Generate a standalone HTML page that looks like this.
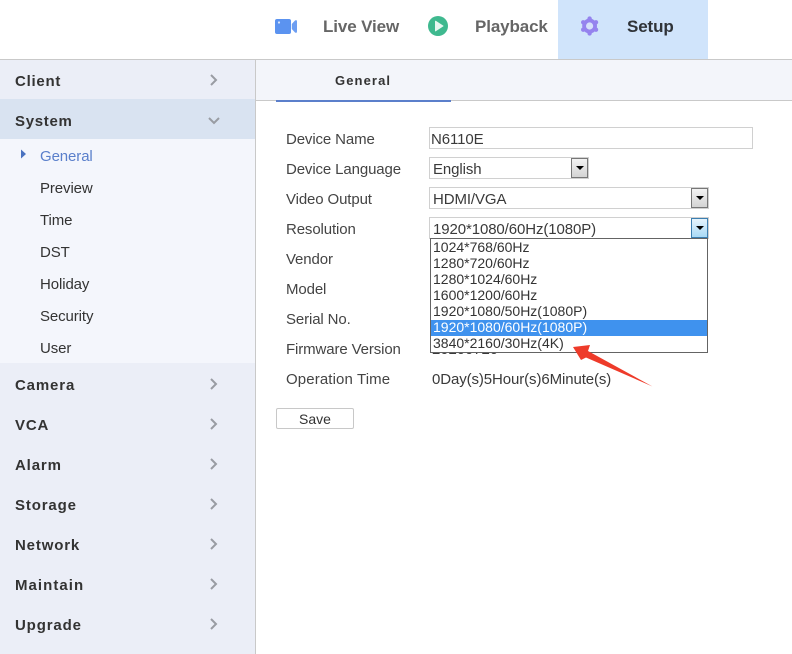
<!DOCTYPE html>
<html><head><meta charset="utf-8"><style>
html,body{margin:0;padding:0}
body{width:792px;height:654px;position:relative;overflow:hidden;background:#fff;font-family:"Liberation Sans","DejaVu Sans",sans-serif;color:#333}
.a{position:absolute}
.t{position:absolute;white-space:nowrap;line-height:20px;height:20px}
.nav{font-size:17px;font-weight:bold;color:#666;top:17px;letter-spacing:-.12px}
.m{font-size:15px;font-weight:bold;left:15px;color:#333;letter-spacing:.85px}
.s{font-size:15px;left:40px;color:#333;font-weight:normal;letter-spacing:-.1px}
.l{font-size:15px;left:286px;color:#444;letter-spacing:-.12px}
.v{font-size:15px;color:#3a3a3a;letter-spacing:-.1px}
.box{position:absolute;box-sizing:border-box;border:1px solid #d0d0d0;background:#fff}
.btn{position:absolute;box-sizing:border-box;width:17px;height:20px;border:1px solid #777;background:linear-gradient(#f2f2f2,#d4d4d4)}
.btn:after{content:"";position:absolute;left:4px;top:7px;border-left:4px solid transparent;border-right:4px solid transparent;border-top:4px solid #000}
.o{position:absolute;left:433px;font-size:14px;line-height:16px;height:16px;white-space:nowrap;color:#333}
</style></head><body>

<div class="a" style="left:558px;top:0;width:150px;height:59px;background:#d0e4fb"></div>
<div class="a" style="left:0;top:59px;width:792px;height:1px;background:#c9c9c9"></div>

<svg class="a" style="left:275px;top:18px" width="24" height="17" viewBox="0 0 24 17"><rect x="0" y="1" width="16" height="15" rx="2" fill="#5b93f0"/><path d="M16.8 6L20 2.5Q22 1.5 22 3.5V13.5Q22 15.5 20 14.5L16.8 11Z" fill="#6d9ef2"/><circle cx="4" cy="4.5" r="1.1" fill="#dbe7fc"/></svg>
<div class="t nav" style="left:323px">Live View</div>
<svg class="a" style="left:428px;top:16px" width="20" height="20" viewBox="0 0 20 20"><circle cx="10" cy="10" r="10" fill="#3fb98f"/><path d="M7.5 5.2L15 10L7.5 14.8Z" fill="#e8f7f1" stroke="#e8f7f1" stroke-linejoin="round"/></svg>
<div class="t nav" style="left:475px">Playback</div>
<svg class="a" style="left:580px;top:16px" width="20" height="20" viewBox="0 0 20 20" fill="#9583ee"><circle cx="9.6" cy="10" r="7.4"/><circle cx="9.6" cy="2.6" r="2.2"/><circle cx="9.6" cy="17.4" r="2.2"/><circle cx="3.2" cy="6.3" r="2.2"/><circle cx="16" cy="6.3" r="2.2"/><circle cx="3.2" cy="13.7" r="2.2"/><circle cx="16" cy="13.7" r="2.2"/><circle cx="9.6" cy="10" r="3.6" fill="#d6e0fa"/></svg>
<div class="t nav" style="left:627px;color:#2f3338">Setup</div>

<!-- sidebar -->
<div class="a" style="left:0;top:60px;width:255px;height:594px;background:#ebeef7"></div>
<div class="a" style="left:255px;top:60px;width:1px;height:594px;background:#c9c9c9"></div>
<div class="a" style="left:0;top:99px;width:255px;height:40px;background:#d9e3f1"></div>
<div class="a" style="left:0;top:139px;width:255px;height:224px;background:#f4f6fc"></div>

<div class="t m" style="top:72px;letter-spacing:.75px">Client</div>
<div class="t m" style="top:112px;letter-spacing:.7px">System</div>
<svg class="a" style="left:20px;top:149px" width="7" height="10" viewBox="0 0 7 10"><path d="M1 .5L6 5L1 9.5Z" fill="#4a72c0"/></svg>
<div class="t s" style="top:147px;color:#5a7fcb">General</div>
<div class="t s" style="top:179px">Preview</div>
<div class="t s" style="top:211px">Time</div>
<div class="t s" style="top:243px">DST</div>
<div class="t s" style="top:275px">Holiday</div>
<div class="t s" style="top:307px">Security</div>
<div class="t s" style="top:339px">User</div>
<div class="t m" style="top:376px">Camera</div>
<div class="t m" style="top:416px">VCA</div>
<div class="t m" style="top:456px">Alarm</div>
<div class="t m" style="top:496px">Storage</div>
<div class="t m" style="top:536px">Network</div>
<div class="t m" style="top:576px;letter-spacing:1.05px">Maintain</div>
<div class="t m" style="top:616px">Upgrade</div>

<svg class="a" style="left:205px;top:70px" width="20" height="570" viewBox="0 0 20 570" fill="none" stroke="#999ca3" stroke-width="2">
<path d="M6 5L11 10L6 15"/>
<path d="M4 48L9 53L14 48"/>
<path d="M6 309L11 314L6 319"/>
<path d="M6 349L11 354L6 359"/>
<path d="M6 389L11 394L6 399"/>
<path d="M6 429L11 434L6 439"/>
<path d="M6 469L11 474L6 479"/>
<path d="M6 509L11 514L6 519"/>
<path d="M6 549L11 554L6 559"/>
</svg>

<!-- tabs -->
<div class="a" style="left:256px;top:60px;width:536px;height:40px;background:#f3f5fa"></div>
<div class="a" style="left:256px;top:100px;width:536px;height:1px;background:#c9c9c9"></div>
<div class="a" style="left:276px;top:100px;width:175px;height:2px;background:#5b7fcb"></div>
<div class="t" style="left:335px;top:71px;font-size:13px;font-weight:bold;letter-spacing:1.1px;color:#333">General</div>

<!-- form -->
<div class="t l" style="top:130px">Device Name</div>
<div class="t l" style="top:160px">Device Language</div>
<div class="t l" style="top:190px">Video Output</div>
<div class="t l" style="top:220px">Resolution</div>
<div class="t l" style="top:250px">Vendor</div>
<div class="t l" style="top:280px">Model</div>
<div class="t l" style="top:310px">Serial No.</div>
<div class="t l" style="top:340px">Firmware Version</div>
<div class="t l" style="top:370px;letter-spacing:.12px">Operation Time</div>

<div class="box" style="left:429px;top:127px;width:324px;height:22px"></div>
<div class="t v" style="left:431px;top:130px">N6110E</div>

<div class="box" style="left:429px;top:157px;width:160px;height:22px"></div>
<div class="t v" style="left:433px;top:160px">English</div>
<div class="btn" style="left:571px;top:158px"></div>

<div class="box" style="left:429px;top:187px;width:280px;height:22px"></div>
<div class="t v" style="left:433px;top:190px">HDMI/VGA</div>
<div class="btn" style="left:691px;top:188px"></div>

<div class="box" style="left:429px;top:217px;width:280px;height:22px"></div>
<div class="t v" style="left:433px;top:220px">1920*1080/60Hz(1080P)</div>
<div class="btn" style="left:691px;top:218px;border-color:#3c7fb1;background:linear-gradient(#e6f4fc,#a9daf6)"></div>

<div class="t v" style="left:432px;top:340px">20200720</div>
<div class="t v" style="left:432px;top:370px">0Day(s)5Hour(s)6Minute(s)</div>

<!-- dropdown -->
<div class="a" style="left:430px;top:238px;width:278px;height:115px;box-sizing:border-box;border:1px solid #646464;background:#fff"></div>
<div class="a" style="left:431px;top:320px;width:276px;height:16px;background:#3f92ee"></div>
<div class="o" style="top:239px">1024*768/60Hz</div>
<div class="o" style="top:255px">1280*720/60Hz</div>
<div class="o" style="top:271px">1280*1024/60Hz</div>
<div class="o" style="top:287px">1600*1200/60Hz</div>
<div class="o" style="top:303px">1920*1080/50Hz(1080P)</div>
<div class="o" style="top:319px;color:#fff">1920*1080/60Hz(1080P)</div>
<div class="o" style="top:335px">3840*2160/30Hz(4K)</div>

<!-- arrow -->
<svg class="a" style="left:565px;top:340px" width="95" height="52" viewBox="0 0 95 52"><path d="M8 7L25 5L23 11L87.5 46.5L21 17.5L16 20Z" fill="#ee3b2a"/></svg>

<!-- save -->
<div class="a" style="left:276px;top:408px;width:78px;height:21px;box-sizing:border-box;border:1px solid #c8c8c8;border-radius:2px;background:#fff;text-align:center;font-size:14px;line-height:20px;color:#333">Save</div>

</body></html>
